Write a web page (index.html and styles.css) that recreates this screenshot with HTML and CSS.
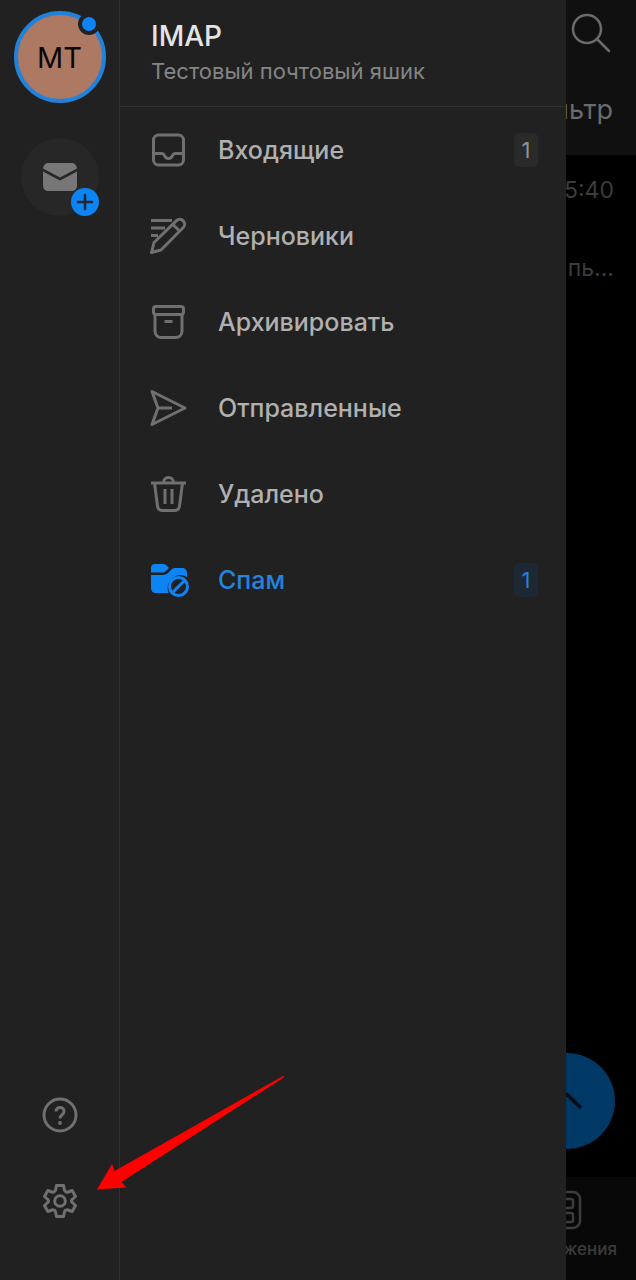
FILE: index.html
```html
<!DOCTYPE html>
<html lang="ru">
<head>
    <meta charset="UTF-8">
    <meta name="viewport" content="width=device-width, initial-scale=1.0">
    <title>Почта</title>
    <link rel="stylesheet" href="styles.css">
</head>
<body>

    <div class="app">
        <!-- accounts -->
        <aside class="rail">
            <button class="avatar" type="button" aria-label="Аккаунт MT">
                MT
                <span class="avatar-dot"></span>
            </button>
            <button class="add-account" type="button" aria-label="Добавить аккаунт">
                <svg width="36" height="30" viewBox="0 0 36 30">
                    <path fill="#777" d="M1 6.500C1.300 3 3.500 1 7 1h22c3.500 0 5.700 2 6 5.500L18 15.500z"/>
                    <path fill="#777" d="M1 9.500l17 9 17-9V23c0 4-2 6-6 6H7c-4 0-6-2-6-6z"/>
                </svg>
                <span class="add-badge">
                    <svg width="28" height="28" viewBox="0 0 28 28">
                        <path d="M14 7v14M7 14h14" stroke="#1c2732" stroke-width="2.500" stroke-linecap="round"/>
                    </svg>
                </span>
            </button>

            <div class="rail-bottom">
                <button class="rail-button" type="button" aria-label="Справка">
                    <svg class="icon" viewBox="0 0 38 38">
                        <circle cx="19" cy="19" r="16"/>
                        <path d="M15 15.500c0-5.500 8-5.500 8 0 0 3-4 3.500-4 7"/>
                        <circle cx="19" cy="27" r="1.900" fill="#707070" stroke="none"/>
                    </svg>
                </button>
                <button class="rail-button" type="button" aria-label="Настройки">
                    <svg class="icon" viewBox="0 0 38 38">
                        <circle cx="19" cy="19" r="5.300"/>
                        <path d="M15.500 3.500h7l1 4.700q.3 1.100 1.400 1.600 1 .6 2.100.2l4.200-1.500 3.300 6-3.300 3q-1.300 1.500 0 3l3.300 3-3.300 6-4.200-1.500q-1.100-.4-2.100.2-1.100.5-1.400 1.600l-1 4.700h-7l-1-4.700q-.3-1.100-1.400-1.600-1-.6-2.100-.2l-4.200 1.500-3.300-6 3.300-3q1.300-1.500 0-3l-3.300-3 3.300-6 4.200 1.500q1.100.4 2.100-.2 1.100-.5 1.400-1.600z"/>
                    </svg>
                </button>
            </div>
        </aside>

        <!-- folders -->
        <main class="drawer">
            <header class="drawer-header">
                <h1>IMAP</h1>
                <p>Тестовый почтовый яшик</p>
            </header>
            <nav class="folders">
                <a class="folder" href="#inbox">
                    <svg class="icon" viewBox="0 0 38 38">
                        <rect x="4.500" y="4" width="30" height="30" rx="5"/>
                        <path d="M4.500 22.500h8.500c1.500 0 2 .8 2.500 2 1.500 4 6.500 4 8 0 .5-1.200 1-2 2.500-2h8.500"/>
                    </svg>
                    <span class="folder-name">Входящие</span>
                    <span class="count">1</span>
                </a>
                <a class="folder" href="#drafts">
                    <svg class="icon" viewBox="0 0 38 38">
                        <path d="M2 3.500h21M2 11h14M2 18.500h7"/>
                        <path d="M2.500 35.500l2.500-10L27.500 3.700c4.500-4.200 11 2.300 6.800 6.800L12 33zM24 7.500l6.500 6.500"/>
                    </svg>
                    <span class="folder-name">Черновики</span>
                </a>
                <a class="folder" href="#archive">
                    <svg class="icon" viewBox="0 0 38 38">
                        <rect x="4.500" y="3.500" width="30" height="8" rx="2.500"/>
                        <path d="M6 11.500V28c0 4 2.500 6.500 6.500 6.500h14c4 0 6.500-2.500 6.500-6.500V11.500M15.500 18.500h8"/>
                    </svg>
                    <span class="folder-name">Архивировать</span>
                </a>
                <a class="folder" href="#sent">
                    <svg class="icon" viewBox="0 0 38 38">
                        <path d="M3 2.500l33 16.500L3 35.500l6-16.500zM9 19h14"/>
                    </svg>
                    <span class="folder-name">Отправленные</span>
                </a>
                <a class="folder" href="#deleted">
                    <svg class="icon" viewBox="0 0 38 38">
                        <path d="M2 8h35M14.500 8c0-7.500 10-7.500 10 0M5.500 8l3 23c.4 3 2 4.500 5 4.500h12c3 0 4.600-1.500 5-4.500l3-23M16 14v15M23 14v15"/>
                    </svg>
                    <span class="folder-name">Удалено</span>
                </a>
                <a class="folder active" href="#spam" aria-current="page">
                    <svg class="icon" viewBox="0 0 38 38">
                        <path fill="#0c84f3" stroke="none" d="M2 11.500V7c0-2.500 1.500-4 4-4h8c1.500 0 2.500.5 3.500 1.500L20 7l-3 3q-1.500 1.500-3.500 1.500z"/>
                        <path fill="#0c84f3" stroke="none" d="M2 14h12c2 0 3.500-.7 5-2l3.500-3.500C23.500 7.500 24.500 7 26 7h7c3 0 5 2 5 5v4q-8-4.500-15 1.500-6.500 6-3.500 14.500H7c-3 0-5-2-5-5z"/>
                        <circle cx="29.500" cy="25.500" r="9"/>
                        <path d="M23.500 31.500l12-12"/>
                    </svg>
                    <span class="folder-name">Спам</span>
                    <span class="count">1</span>
                </a>
            </nav>
        </main>

        <!-- dimmed message list behind the drawer -->
        <section class="mail">
            <header class="mail-header">
                <button class="search" type="button" aria-label="Поиск">
                    <svg width="42" height="42" viewBox="0 0 42 42" fill="none" stroke="#6b6b6b" stroke-width="2.500" stroke-linecap="round">
                        <circle cx="16" cy="17" r="14"/>
                        <path d="M26 27l12 12"/>
                    </svg>
                </button>
                <button class="filter" type="button">Фильтр</button>
            </header>
            <div class="message">
                <time>15:40</time>
                <p>пь...</p>
            </div>
            <button class="compose" type="button" aria-label="Написать">
                <svg width="32" height="18" viewBox="0 0 32 18" fill="none" stroke="#030a12" stroke-width="3.500">
                    <path d="M2 16L16 2.500 30 16"/>
                </svg>
            </button>
            <footer class="tabs">
                <a class="tab" href="#apps">
                    <svg width="40" height="40" viewBox="0 0 40 40" fill="none" stroke="#3c3c3c" stroke-width="2.500">
                        <rect x="0" y="2" width="36" height="36" rx="7"/>
                        <rect x="6" y="9" width="9" height="9" rx="2"/>
                        <rect x="20" y="9" width="9" height="9" rx="2"/>
                        <rect x="6" y="23" width="9" height="9" rx="2"/>
                        <rect x="20" y="23" width="9" height="9" rx="2"/>
                    </svg>
                    <span>Приложения</span>
                </a>
            </footer>
        </section>

        <!-- pointer to the settings button -->
        <svg class="pointer" width="190" height="116" viewBox="0 0 190 116" aria-hidden="true">
            <path fill="#f00" d="M188 2l1.500 1L26.500 108l5 5.500L2 115.500 17 90l2.500 7z"/>
        </svg>
    </div>

</body>
</html>
```

FILE: styles.css
```css
* {
    margin: 0;
    padding: 0;
    box-sizing: border-box;
}

body {
    font-family: Inter, "Noto Sans", sans-serif;
    background-color: #000;
    color: #b0b0b0;
}

button {
    background: none;
    border: none;
    font-family: inherit;
    color: inherit;
    cursor: pointer;
}

a {
    color: inherit;
    text-decoration: none;
}

svg {
    display: block;
}

.app {
    position: relative;
    display: flex;
    min-height: 100vh;
}

.icon {
    width: 38px;
    height: 38px;
    flex: none;
    overflow: visible;
    fill: none;
    stroke: #707070;
    stroke-width: 3px;
    stroke-linejoin: round;
}

/* accounts */
.rail {
    width: 120px;
    flex: none;
    display: flex;
    flex-direction: column;
    align-items: center;
    padding: 11px 0 36px;
    background-color: #212121;
    border-right: 1px solid #303030;
}

.avatar {
    position: relative;
    width: 92px;
    height: 92px;
    border: 4px solid #2182dc;
    border-radius: 50%;
    background-color: #ad7963;
    color: #0a0807;
    font-size: 29px;
}

.avatar-dot {
    position: absolute;
    top: -2px;
    right: 2px;
    width: 22px;
    height: 22px;
    border: 4px solid #212121;
    border-radius: 50%;
    background-color: #0c84f3;
}

.add-account {
    position: relative;
    display: flex;
    align-items: center;
    justify-content: center;
    width: 78px;
    height: 78px;
    margin-top: 35px;
    border-radius: 50%;
    background-color: #272727;
}

.add-badge {
    position: absolute;
    right: 0;
    bottom: 0;
    border-radius: 50%;
    background-color: #0c84f3;
}

.rail-bottom {
    margin-top: auto;
}

.rail-button {
    display: flex;
    align-items: center;
    justify-content: center;
    width: 86px;
    height: 86px;
}

/* folders */
.drawer {
    flex: 1;
    min-width: 0;
    background-color: #212121;
}

.drawer-header {
    height: 107px;
    padding: 18px 31px 0;
    border-bottom: 1px solid #303030;
}

.drawer-header h1 {
    font-size: 28px;
    line-height: 36px;
    font-weight: 500;
    color: #e4e4e4;
}

.drawer-header p {
    font-size: 22px;
    line-height: 34px;
    color: #858585;
}

.folder {
    display: flex;
    align-items: center;
    height: 86px;
    padding: 0 28px 0 29px;
    font-size: 25px;
    font-weight: 500;
}

.folder-name {
    flex: 1;
    margin-left: 31px;
}

.count {
    width: 24px;
    border-radius: 5px;
    background-color: #2a2a2a;
    color: #929292;
    font-size: 22px;
    line-height: 34px;
    font-weight: 400;
    text-align: center;
}

.active {
    color: #2484df;
}

.active .icon {
    stroke: #0c84f3;
}

.active .count {
    background-color: #1d2835;
    color: #2a80d2;
}

/* message list */
.mail {
    width: 70px;
    flex: none;
    display: flex;
    flex-direction: column;
    align-items: flex-end;
    overflow: hidden;
    color: #3c3c3c;
}

.mail-header {
    display: flex;
    flex-direction: column;
    align-items: flex-end;
    gap: 38px;
    width: 100%;
    height: 155px;
    padding: 12px 23px 0 0;
    background-color: #101010;
}

.filter {
    color: #6b6b6b;
    font-size: 27px;
    line-height: 36px;
}

.message {
    display: flex;
    flex-direction: column;
    align-items: flex-end;
    gap: 44px;
    padding: 18px 22px 0 0;
    font-size: 23px;
    line-height: 34px;
}

.compose {
    display: flex;
    align-items: center;
    justify-content: center;
    flex: none;
    width: 96px;
    height: 96px;
    margin: auto 21px 28px 0;
    border-radius: 50%;
    background-color: #003866;
}

.tabs {
    display: flex;
    justify-content: flex-end;
    width: 100%;
    height: 103px;
    padding: 13px 19px 0 0;
    background-color: #080808;
}

.tab {
    display: flex;
    flex-direction: column;
    align-items: center;
    gap: 8px;
    font-size: 17px;
    line-height: 22px;
    font-weight: 500;
}

.pointer {
    position: absolute;
    left: 95px;
    bottom: 90px;
}
```
